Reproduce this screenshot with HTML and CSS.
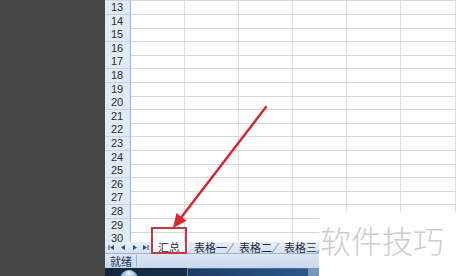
FILE: index.html
```html
<!DOCTYPE html>
<html lang="zh-CN">
<head>
    <meta charset="UTF-8">
    <title>汇总</title>
    <link rel="stylesheet" href="styles.css">
</head>
<body>
<div class="screen">
    <div class="desk"></div>
    <div class="excel">
        <div class="sheet">
            <div class="row"><div class="rh">13</div><div class="c"></div><div class="c"></div><div class="c"></div><div class="c"></div><div class="c"></div><div class="c"></div></div>
            <div class="row"><div class="rh">14</div><div class="c"></div><div class="c"></div><div class="c"></div><div class="c"></div><div class="c"></div><div class="c"></div></div>
            <div class="row"><div class="rh">15</div><div class="c"></div><div class="c"></div><div class="c"></div><div class="c"></div><div class="c"></div><div class="c"></div></div>
            <div class="row"><div class="rh">16</div><div class="c"></div><div class="c"></div><div class="c"></div><div class="c"></div><div class="c"></div><div class="c"></div></div>
            <div class="row"><div class="rh">17</div><div class="c"></div><div class="c"></div><div class="c"></div><div class="c"></div><div class="c"></div><div class="c"></div></div>
            <div class="row"><div class="rh">18</div><div class="c"></div><div class="c"></div><div class="c"></div><div class="c"></div><div class="c"></div><div class="c"></div></div>
            <div class="row"><div class="rh">19</div><div class="c"></div><div class="c"></div><div class="c"></div><div class="c"></div><div class="c"></div><div class="c"></div></div>
            <div class="row"><div class="rh">20</div><div class="c"></div><div class="c"></div><div class="c"></div><div class="c"></div><div class="c"></div><div class="c"></div></div>
            <div class="row"><div class="rh">21</div><div class="c"></div><div class="c"></div><div class="c"></div><div class="c"></div><div class="c"></div><div class="c"></div></div>
            <div class="row"><div class="rh">22</div><div class="c"></div><div class="c"></div><div class="c"></div><div class="c"></div><div class="c"></div><div class="c"></div></div>
            <div class="row"><div class="rh">23</div><div class="c"></div><div class="c"></div><div class="c"></div><div class="c"></div><div class="c"></div><div class="c"></div></div>
            <div class="row"><div class="rh">24</div><div class="c"></div><div class="c"></div><div class="c"></div><div class="c"></div><div class="c"></div><div class="c"></div></div>
            <div class="row"><div class="rh">25</div><div class="c"></div><div class="c"></div><div class="c"></div><div class="c"></div><div class="c"></div><div class="c"></div></div>
            <div class="row"><div class="rh">26</div><div class="c"></div><div class="c"></div><div class="c"></div><div class="c"></div><div class="c"></div><div class="c"></div></div>
            <div class="row"><div class="rh">27</div><div class="c"></div><div class="c"></div><div class="c"></div><div class="c"></div><div class="c"></div><div class="c"></div></div>
            <div class="row"><div class="rh">28</div><div class="c"></div><div class="c"></div><div class="c"></div><div class="c"></div><div class="c"></div><div class="c"></div></div>
            <div class="row"><div class="rh">29</div><div class="c"></div><div class="c"></div><div class="c"></div><div class="c"></div><div class="c"></div><div class="c"></div></div>
            <div class="row"><div class="rh">30</div><div class="c"></div><div class="c"></div><div class="c"></div><div class="c"></div><div class="c"></div><div class="c"></div></div>
        </div>
        <div class="tabbar">
            <div class="nav">
                <svg width="44" height="11" viewBox="0 0 44 11">
                    <path d="M3 3v5" stroke="#2b4a74" stroke-width="1"/>
                    <path d="M8 3l-4 2.5 4 2.5z" fill="#2b4a74"/>
                    <path d="M19 3l-4 2.5 4 2.5z" fill="#2b4a74"/>
                    <path d="M27 3l4 2.5-4 2.5z" fill="#2b4a74"/>
                    <path d="M37 3l4 2.5-4 2.5z" fill="#2b4a74"/>
                    <path d="M42 3v5" stroke="#2b4a74" stroke-width="1"/>
                </svg>
            </div>
            <div class="tab active">汇总</div>
            <div class="tab">表格一</div>
            <div class="tab">表格二</div>
            <div class="tab">表格三</div>
        </div>
        <div class="status"><span class="ready">就绪</span><span class="sep"></span></div>
        <div class="taskbar">
            <div class="orb"></div>
            <div class="task"></div>
            <div class="task-end"></div>
        </div>
    </div>

    <!-- 红色箭头 -->
    <svg class="arrow" width="456" height="276" viewBox="0 0 456 276">
        <line x1="266" y1="107" x2="180" y2="219" stroke="#d8232d" stroke-width="2.4" stroke-linecap="round"/>
        <path d="M173 228 L176.5 213 L186.5 220.8 Z" fill="#e0232d"/>
    </svg>
    <div class="hilite"></div>
    <div class="mark">软件技巧</div>
</div>
</body>
</html>
```

FILE: styles.css
```css
html, body { margin: 0; padding: 0; }
body { background: #474747; font-family: "Liberation Sans", "Noto Sans CJK SC", sans-serif; }

.screen { position: relative; width: 456px; height: 276px; overflow: hidden; display: flex; }
.desk { width: 105px; flex: none; background: #474747; }
.excel { width: 351px; height: 276px; flex: none; display: flex; flex-direction: column; background: #fff; overflow: hidden; }

/* 表格区域 */
.sheet { height: 242px; flex: none; overflow: hidden; border-top: 1px solid #d4d8de; box-sizing: border-box; }
.row { display: grid; grid-template-columns: 26px 54px 54px 54px 54px 54px 55px; height: 13.6px; }
.rh {
    background: #e2eaf5;
    border-right: 1px solid #9db3cf;
    border-bottom: 1px solid #c3d0e2;
    font-size: 11px; line-height: 13px; color: #2c2c2c;
    text-align: center; padding-right: 1px;
}
.c { border-right: 1px solid #d9dce1; border-bottom: 1px solid #d4d8de; }

/* 工作表标签 */
.tabbar {
    height: 11px; flex: none; display: flex; align-items: stretch;
    background: linear-gradient(#e6eef8, #d5e1f0);
    border-bottom: 1px solid #9db3cf;
    font-family: "Noto Sans CJK SC", sans-serif; font-size: 11px; line-height: 11px; color: #1d2a3c;
}
.nav { width: 47px; display: flex; align-items: center; padding-left: 1px; }
.tab { position: relative; padding: 0 6px 0 5px; margin-right: 1px; }
.tab::after {
    content: ""; position: absolute; right: -4px; top: 1px; bottom: 0; width: 6px;
    border-left: 1px solid #8296b2;
    transform: skewX(-35deg);
}
.tab.active { background: #fff; padding: 0 8px 0 5px; }
.tab.active::after { display: none; }

/* 状态栏 */
.status {
    height: 14px; flex: none; display: flex; align-items: center;
    background: linear-gradient(#dde8f6, #c7d7ec);
    font-family: "Noto Sans CJK SC", sans-serif; font-size: 11px; color: #1e395b;
}
.ready { padding-left: 5px; width: 26px; }
.sep { width: 1px; height: 12px; background: #9fb4cf; }

/* 任务栏 */
.taskbar { height: 8px; flex: none; display: flex; overflow: hidden; background: linear-gradient(90deg, #13263d, #1c3a5e 60%, #24507e); }
.orb { width: 18px; height: 18px; flex: none; margin: 2px 0 0 15px; border-radius: 50%; background: radial-gradient(circle at 50% 20%, #e9f2fb, #6d99c6 55%, #1c3a5e 80%); }
.task { width: 120px; flex: none; margin-left: 49px; border-left: 1px solid #6a8bb3; border-top: 1px solid #4b6e99; background: linear-gradient(90deg, #1b3b63, #2a578a); }
.task-end { flex: 1; background: #7896bc; }

/* 标注 */
.arrow { position: absolute; left: 0; top: 0; }
.hilite { position: absolute; left: 151px; top: 227px; width: 32px; height: 23px; border: 2px solid #c9373d; }
.mark {
    position: absolute; left: 319px; top: 212px; width: 137px; height: 64px;
    background: #fff; color: #cdcdcd;
    font-family: "Noto Sans CJK SC", sans-serif; font-weight: 300; font-size: 31px; line-height: 56px;
    padding-left: 1px; box-sizing: border-box; white-space: nowrap;
}
```
